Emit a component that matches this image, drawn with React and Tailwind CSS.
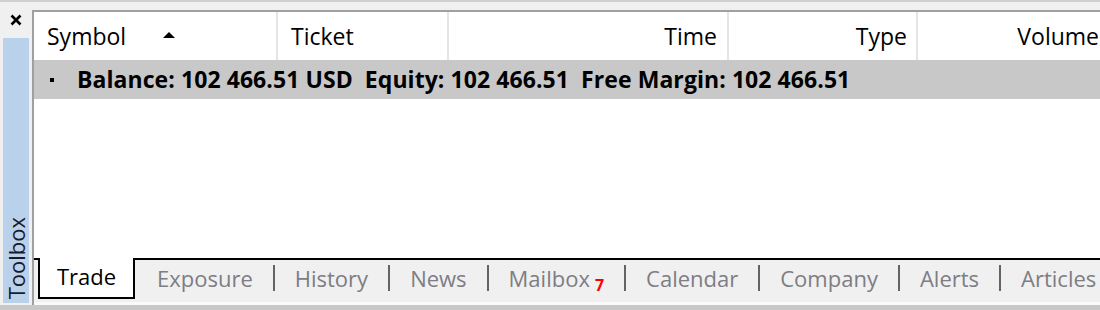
import React from 'react';

const columns = [
  { label: 'Symbol', width: 'w-[244px]', align: 'justify-start pl-[13px]', sort: true },
  { label: 'Ticket', width: 'w-[171px]', align: 'justify-start pl-[13px]' },
  { label: 'Time', width: 'w-[280px]', align: 'justify-end pr-[10px]' },
  { label: 'Type', width: 'w-[189px]', align: 'justify-end pr-[9px]' },
  { label: 'Volume', width: 'w-[200px]', align: 'justify-end pr-[19px]' },
];

const tabs = ['Exposure', 'History', 'News', 'Mailbox', 'Calendar', 'Company', 'Alerts', 'Articles'];

const font = { fontFamily: '"Open Sans", "Noto Sans", sans-serif' };

const Toolbox = () => {
  return (
    <div className="w-[1100px] h-[310px] bg-[#f0f0f0] overflow-hidden flex flex-col border-t-2 border-[#cfcfcf]" style={font}>
      <div className="flex flex-1 min-h-0">
        {/* side strip */}
        <div className="w-[32px] flex flex-col items-center shrink-0">
          <div className="h-[36px] w-full flex justify-center pt-[12px]">
            <svg width="12" height="12" viewBox="0 0 12 12">
              <path d="M1.5 1.5 L10.5 10.5 M10.5 1.5 L1.5 10.5" stroke="#000" strokeWidth="2.6" />
            </svg>
          </div>
          <div className="w-[26px] flex-1 bg-[#b9d1ea] flex flex-col justify-end items-center pb-[4px] mb-[2px]">
            <span className="text-[22px] leading-[22px] text-[#1a1a2a] [writing-mode:vertical-rl] rotate-180">Toolbox</span>
          </div>
        </div>

        {/* main panel */}
        <div className="flex-1 mt-[8px] border-t-2 border-l-2 border-[#a0a0a0] bg-white flex flex-col min-w-0">
          <div className="h-[48px] flex shrink-0">
            {columns.map((c, i) => (
              <div
                key={c.label}
                className={`${c.width} shrink-0 h-full flex items-center ${c.align} ${i < columns.length - 1 ? 'border-r-2 border-[#e5e5e5]' : ''}`}
              >
                <span className="text-[23px] text-black">{c.label}</span>
                {c.sort && (
                  <svg className="ml-[37px] -mt-[3px]" width="12" height="6" viewBox="0 0 12 6">
                    <path d="M0 6 L6 0 L12 6 Z" fill="#000" />
                  </svg>
                )}
              </div>
            ))}
          </div>
          <div className="h-[39px] bg-[#c8c8c8] flex items-center shrink-0">
            <span className="w-[4px] h-[4px] bg-black ml-[16px] mr-[23px]"></span>
            <span className="text-[23px] font-bold text-black whitespace-pre tracking-[0.07px]">
              Balance: 102 466.51 USD  Equity: 102 466.51  Free Margin: 102 466.51
            </span>
          </div>
          <div className="flex-1"></div>

          {/* tab bar */}
          <div className="h-[44px] bg-[#f0f0f0] border-t-2 border-black flex items-start shrink-0 whitespace-nowrap">
            <div className="ml-[4px] -mt-[2px] h-[41px] w-[97px] shrink-0 bg-white border-2 border-black border-t-0 flex items-center justify-center pb-[2px]">
              <span className="text-[22px] text-black">Trade</span>
            </div>
            <div className="flex items-center h-[36px] ml-[2px] shrink-0">
              {tabs.map((t, i) => (
                <React.Fragment key={t}>
                  {i > 0 && <span className="w-[2px] h-[26px] bg-[#646464] shrink-0"></span>}
                  <span className="px-[20px] text-[22px] text-[#7d7d84] flex items-center shrink-0">
                    {t}
                    {t === 'Mailbox' && (
                      <span className="ml-[5px] mt-[14px] text-[16px] font-bold text-[#ff0000] leading-none">7</span>
                    )}
                  </span>
                </React.Fragment>
              ))}
            </div>
          </div>
          <div className="h-[3px] bg-[#fafafa] shrink-0"></div>
        </div>
      </div>
      <div className="h-[5px] bg-[#c8c8c8] shrink-0"></div>
    </div>
  );
};

export default function App() {
  return <Toolbox />;
}
